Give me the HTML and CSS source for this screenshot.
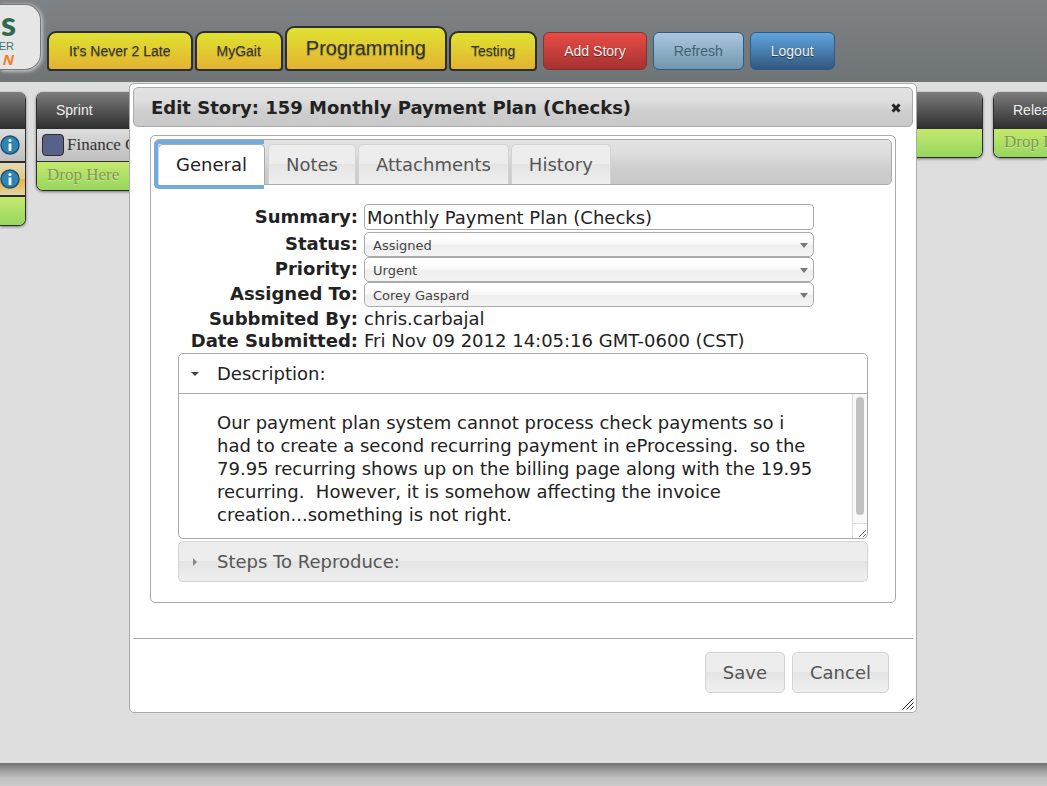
FILE: index.html
```html
<!DOCTYPE html>
<html lang="en">
<head>
<meta charset="utf-8">
<title>Edit Story</title>
<link rel="stylesheet" href="styles.css">
</head>
<body>
<header class="topbar">
  <div class="logo"><span class="logo-name">is</span><span class="logo-mid">ER</span><span class="logo-foot">N</span></div>
  <nav class="projects">
    <button class="project" type="button">It's Never 2 Late</button>
    <button class="project" type="button">MyGait</button>
    <button class="project project-current" type="button">Programming</button>
    <button class="project" type="button">Testing</button>
  </nav>
  <div class="actions">
    <button class="action action-add" type="button">Add Story</button>
    <button class="action action-refresh" type="button">Refresh</button>
    <button class="action action-logout" type="button">Logout</button>
  </div>
</header>

<main class="board">
  <section class="column column-first">
    <h2 class="column-head"></h2>
    <div class="card"><svg class="info" viewBox="0 0 20 20"><circle cx="10" cy="10" r="9" fill="#2c86b4" stroke="#25506d" stroke-width="1.5"/><circle cx="10" cy="5.500" r="1.500" fill="#fff"/><path d="M8.600 8.500h2.800v7.500h-2.800z" fill="#fff"/></svg></div>
    <div class="card card-warm"><svg class="info" viewBox="0 0 20 20"><circle cx="10" cy="10" r="9" fill="#2c86b4" stroke="#25506d" stroke-width="1.5"/><circle cx="10" cy="5.500" r="1.500" fill="#fff"/><path d="M8.600 8.500h2.800v7.500h-2.800z" fill="#fff"/></svg></div>
    <div class="drop"></div>
  </section>
  <section class="column">
    <h2 class="column-head">Sprint</h2>
    <div class="card"><span class="swatch"></span>Finance C</div>
    <div class="drop">Drop Here</div>
  </section>
  <section class="column">
    <h2 class="column-head"></h2>
    <div class="drop"></div>
  </section>
  <section class="column">
    <h2 class="column-head"></h2>
    <div class="drop"></div>
  </section>
  <section class="column column-last">
    <h2 class="column-head">Release</h2>
    <div class="drop">Drop Here</div>
  </section>
</main>
<footer class="page-foot"></footer>

<div class="dialog" role="dialog" aria-labelledby="dialog-title">
  <div class="dialog-bar">
    <h1 class="dialog-title" id="dialog-title">Edit Story: 159 Monthly Payment Plan (Checks)</h1>
    <button class="close" type="button" aria-label="Close"><svg viewBox="0 0 10 10" width="10" height="10"><path d="M1.5 1.5l7 7M8.5 1.5l-7 7" stroke="#222" stroke-width="3"/></svg></button>
  </div>
  <div class="tabs">
    <div class="tab-list" role="tablist">
      <button class="tab tab-active" type="button" role="tab" aria-selected="true">General</button>
      <button class="tab" type="button" role="tab">Notes</button>
      <button class="tab" type="button" role="tab">Attachments</button>
      <button class="tab" type="button" role="tab">History</button>
    </div>
    <div class="panel">
      <form class="fields">
        <label class="label label-tall" for="summary">Summary:</label>
        <input class="text" id="summary" type="text" value="Monthly Payment Plan (Checks)">
        <label class="label" for="status">Status:</label>
        <div class="picker"><select class="select" id="status"><option>Assigned</option></select></div>
        <label class="label" for="priority">Priority:</label>
        <div class="picker"><select class="select" id="priority"><option>Urgent</option></select></div>
        <label class="label" for="assignee">Assigned To:</label>
        <div class="picker"><select class="select" id="assignee"><option>Corey Gaspard</option></select></div>
        <span class="label">Subbmited By:</span>
        <span>chris.carbajal</span>
        <span class="label">Date Submitted:</span>
        <span>Fri Nov 09 2012 14:05:16 GMT-0600 (CST)</span>
      </form>
      <button class="fold fold-open" type="button" aria-expanded="true">Description:</button>
      <div class="description">
        <p class="description-text">Our payment plan system cannot process check payments so i
had to create a second recurring payment in eProcessing.  so the
79.95 recurring shows up on the billing page along with the 19.95
recurring.  However, it is somehow affecting the invoice
creation...something is not right.</p>
        <div class="scroll">
          <div class="scroll-track"><div class="scroll-thumb"></div></div>
          <svg class="scroll-grip" viewBox="0 0 14 14"><path d="M6 13l7-7M10 13l3-3" stroke="#666" stroke-width="1"/></svg>
        </div>
      </div>
      <button class="fold" type="button" aria-expanded="false">Steps To Reproduce:</button>
    </div>
  </div>
  <div class="dialog-foot">
    <button class="btn" type="button">Save</button>
    <button class="btn" type="button">Cancel</button>
  </div>
  <svg class="resize" viewBox="0 0 12 12"><path d="M.5 11.5l11-11M4.500 11.500l7-7M8.500 11.500l3-3" stroke="#222" stroke-width="1"/></svg>
</div>
</body>
</html>
```
FILE: styles.css
```css
* { box-sizing: border-box; }
body {
  margin: 0;
  min-height: 100vh;
  display: flex;
  flex-direction: column;
  position: relative;
  overflow: hidden;
  background: #cbcbcb;
  font-family: "Liberation Sans", Arial, sans-serif;
}
button, input, select { font-family: inherit; }
h1, h2, p { margin: 0; }

.topbar {
  display: flex;
  align-items: flex-end;
  height: 82px;
  padding-bottom: 11px;
  background: linear-gradient(#7e8284, #6f7476);
}
.logo {
  display: flex;
  flex-direction: column;
  align-items: flex-end;
  align-self: flex-start;
  width: 41px;
  height: 66px;
  margin-top: 4px;
  padding: 0 24px 0 0;
  border: 1px solid #777;
  border-left: 0;
  border-radius: 0 16px 16px 0;
  background: #e6e6e6;
  box-shadow: 1px 1px 4px #e0e0e0;
  overflow: hidden;
}
.logo-name { font: 900 34px/36px Lato, sans-serif; color: #2f6950; }
.logo-mid { margin-right: 2px; font-size: 11px; line-height: 10px; color: #467565; }
.logo-foot { margin-right: 2px; font: italic bold 15px/17px "Open Sans", sans-serif; color: #ee7f30; }

.projects { display: flex; align-items: flex-end; gap: 2px; margin-left: 6px; }
.project {
  height: 40px;
  padding: 0 20px;
  border: 2px solid #2e2e2e;
  border-radius: 9px 9px 4px 4px;
  background: linear-gradient(#dfe231, #e4b331);
  color: #333;
  font-size: 14px;
  text-shadow: 0 1px 1px rgba(0, 0, 0, .3);
}
.project-current { height: 45px; padding: 0 19px; font-size: 20px; }
.actions { display: flex; gap: 6px; margin: 0 0 1px 6px; }
.action {
  height: 38px;
  padding: 0 20px;
  border: 1px solid #2d5a87;
  border-radius: 6px;
  color: #eee;
  font-size: 14px;
  text-shadow: 0 1px 1px rgba(0, 0, 0, .5);
}
.action-add { border-color: #8c2f30; background: linear-gradient(#e84c45, #a63232); }
.action-refresh { background: linear-gradient(#a9c8e0, #7297ad); color: #446170; text-shadow: none; }
.action-logout { background: linear-gradient(#5fa5df, #32577e); }

.board {
  flex: 1;
  display: grid;
  grid-template-columns: 26px 1fr 1fr 1fr 54px;
  gap: 10px;
  align-items: start;
  padding-top: 10px;
  background: #dedede;
}
.column {
  min-width: 0;
  overflow: hidden;
  border: 1px solid #2d2d2d;
  border-top: 0;
  border-radius: 7px;
  box-shadow: 0 1px 3px #777;
  color: #333;
  font-family: "Liberation Serif", serif;
  font-size: 17px;
  white-space: nowrap;
}
.column-first { border-left: 0; border-radius: 0 7px 7px 0; }
.column-last { border-right: 0; border-radius: 7px 0 0 7px; }
.column-head {
  height: 37px;
  padding-left: 19px;
  background: linear-gradient(#7d7d7d, #2d2d2d);
  color: #eee;
  font: 14px/36px "Liberation Sans", sans-serif;
}
.card {
  display: flex;
  align-items: center;
  gap: 3px;
  height: 33px;
  padding-left: 5px;
  border-bottom: 1px solid #2d2d2d;
  background: linear-gradient(#dcdcdc, #bfbfbf);
}
.column-first .card { height: 34px; padding-left: 0; border-bottom-width: 2px; }
.card-warm { background: linear-gradient(#e2dab8, #e3ca85 48%, #eab23c 52%, #dfd3aa); }
.info { width: 20px; height: 20px; }
.swatch { width: 22px; height: 22px; border: 1px solid #2d2d2d; border-radius: 4px; background: #586187; }
.drop {
  height: 28px;
  padding-left: 10px;
  background: linear-gradient(#c5e86d, #97d65f);
  color: #81994f;
  line-height: 26px;
  text-shadow: 0 1px 1px rgba(255, 255, 255, .4);
}
.page-foot { height: 23px; background: linear-gradient(#707070, #a0a0a0 35%, #c0c0c0 65%, #cbcbcb); }

.dialog {
  position: absolute;
  top: 83px;
  left: 129px;
  right: 130px;
  padding: 3px;
  border: 1px solid #aaa;
  border-radius: 5px;
  background: #fff;
  color: #222;
  font-family: "DejaVu Sans", Verdana, sans-serif;
  font-size: 18px;
}
.dialog-bar {
  display: flex;
  align-items: center;
  justify-content: space-between;
  height: 40px;
  padding: 1px 11px 0 17px;
  border: 1px solid #aaa;
  border-radius: 5px;
  background: linear-gradient(#e2e2e2, #dedede 30%, #cdcdcd 65%, #c9c9c9);
}
.dialog-title { font-size: 18px; line-height: 25px; }
.close { display: flex; padding: 0; border: 0; background: none; }

.tabs { margin: 8px 17px 0; padding: 3px; border: 1px solid #aaa; border-radius: 5px; }
.tab-list {
  display: flex;
  align-items: flex-end;
  gap: 2px;
  height: 46px;
  padding-left: 3px;
  border: 1px solid #aaa;
  border-radius: 5px;
  background: linear-gradient(#e2e2e2, #dedede 30%, #cdcdcd 65%, #c9c9c9);
}
.tab {
  height: 40px;
  padding: 0 17px;
  border: 1px solid #d3d3d3;
  border-bottom: 0;
  border-radius: 5px 5px 0 0;
  background: linear-gradient(#ededed 50%, #e4e4e4 50%, #efefef);
  color: #555;
  font-size: 18px;
}
.tab-active {
  position: relative;
  height: 41px;
  margin: 0 1px -1px 0;
  padding-bottom: 2px;
  border-color: #aaa;
  background: #fff;
  color: #222;
}
.tab-active::after {
  content: "";
  position: absolute;
  inset: -5px 0 -4px -5px;
  border: 4px solid #76aadc;
  border-right: 0;
  border-radius: 5px 0 0 5px;
  box-shadow: inset 1px 0 #c5dcf2;
}
.panel { padding: 19px 24px 17px; }
.fields {
  display: grid;
  grid-template-columns: 180px minmax(0, 450px);
  grid-template-rows: 28px 25px 25px 25px 22px 24px;
  column-gap: 6px;
  line-height: 23px;
}
.label { font-weight: bold; text-align: right; white-space: nowrap; }
.label-tall { line-height: 26px; }
.text {
  width: 100%;
  height: 26px;
  padding: 0 2px;
  border: 1px solid #aaa;
  border-radius: 4px;
  color: #222;
  font-size: 18px;
}
.fields .text, .select, .tab, .fold, .btn { font-family: "DejaVu Sans", Verdana, sans-serif; }
.picker { position: relative; }
.picker::after {
  content: "";
  position: absolute;
  top: 11px;
  right: 6px;
  border: 4px solid transparent;
  border-top: 5px solid #777;
  border-bottom: 0;
}
.select {
  display: block;
  width: 100%;
  height: 25px;
  padding: 1px 8px 0;
  appearance: none;
  border: 1px solid #aaa;
  border-radius: 5px;
  background: linear-gradient(#fff 20%, #f6f6f6 50%, #eee 52%, #f4f4f4);
  color: #444;
  font-size: 13px;
}
.fold {
  display: flex;
  align-items: center;
  gap: 18px;
  width: 100%;
  height: 41px;
  padding: 0 12px;
  border: 1px solid #d3d3d3;
  border-radius: 5px;
  background: linear-gradient(#ededed 50%, #e4e4e4 50%, #efefef);
  color: #555;
  font-size: 18px;
}
.fold::before {
  content: "";
  margin: 0 2px;
  border: 4px solid transparent;
  border-left-color: #888;
  border-right: 0;
}
.fold-open { border-color: #aaa; border-radius: 5px 5px 0 0; background: #fff; color: #222; }
.fold-open::before { margin: 0; border: 4px solid transparent; border-top-color: #444; border-bottom: 0; }
.description {
  display: flex;
  justify-content: space-between;
  margin: -1px 0 2px;
  border: 1px solid #aaa;
  border-radius: 0 0 5px 5px;
}
.description-text { padding: 17px 0 12px 38px; line-height: 23px; white-space: pre-wrap; }
.scroll { display: flex; flex-direction: column; flex: none; width: 15px; border-left: 1px solid #ddd; }
.scroll-track { flex: 1; padding: 3px 3px 8px; background: #f8f8f8; }
.scroll-thumb { height: 100%; border-radius: 4px; background: #c1c1c1; }
.scroll-grip { height: 15px; border-top: 1px solid #ddd; }

.dialog-foot {
  display: flex;
  justify-content: flex-end;
  gap: 7px;
  margin-top: 35px;
  padding: 13px 24px 16px;
  border-top: 1px solid #aaa;
}
.btn {
  height: 41px;
  padding: 0 17px;
  border: 1px solid #d3d3d3;
  border-radius: 5px;
  background: linear-gradient(#ededed 50%, #e4e4e4 50%, #efefef);
  color: #555;
  font-size: 18px;
}
.resize { position: absolute; right: 2px; bottom: 2px; width: 12px; height: 12px; }
```
